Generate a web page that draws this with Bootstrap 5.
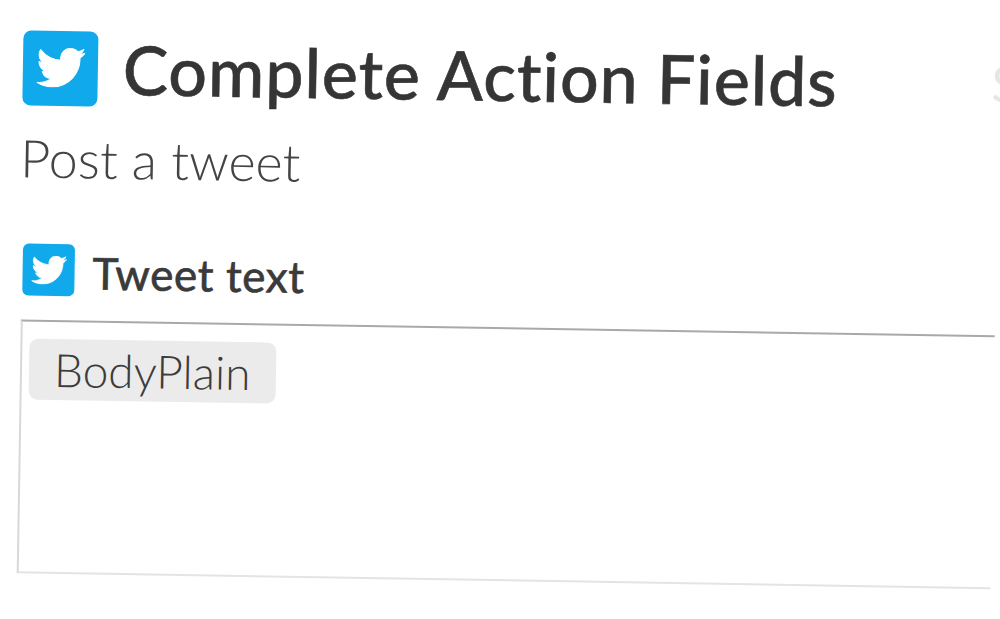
<!DOCTYPE html>
<html lang="en">
<head>
<meta charset="utf-8">
<title>Complete Action Fields</title>
<link href="https://cdn.jsdelivr.net/npm/bootstrap@5.3.0/dist/css/bootstrap.min.css" rel="stylesheet">
<style>
html, body { height: 100%; overflow: hidden; background: #fff; }
body { font-family: Lato, "Open Sans", sans-serif; color: #333; }
.sheet { width: 1020px; padding: 29px 0 0 24px; transform: rotate(.93deg); transform-origin: 0 0; }
.svc { background: #0fa9ec; display: flex; align-items: center; justify-content: center; flex: none; }
.svc-lg { width: 75px; height: 75px; border-radius: 8px; }
.svc-sm { width: 52px; height: 52px; border-radius: 6px; margin-left: 3px; }
.bird { fill: #fff; stroke: #fff; stroke-width: .5; stroke-linejoin: round; }
.title-text { font-size: 68px; font-weight: 500; line-height: 76px; color: #353535; -webkit-text-stroke: .6px #353535; margin: 0 0 0 25px; white-space: nowrap; letter-spacing: 1px; }
.edge-mark { font-size: 50px; color: #e6e6e6; line-height: 76px; }
.sub-text { font-size: 52px; font-weight: 300; line-height: 60px; color: #444; margin: 22px 0 0 -1px; }
.field-label { font-size: 44px; font-weight: 400; line-height: 52px; color: #3a3a3a; -webkit-text-stroke: .7px #3a3a3a; margin: 4px 0 0 18px; letter-spacing: .6px; }
.field-head { margin-top: 54px; }
.entry-box { width: 974px; height: 254px; border-top: 2px solid #a9a9a9; border-left: 2px solid #d8d8d8; border-bottom: 2px solid #e4e4e4; margin: 22px 0 0 2px; padding: 17px 0 0 7px; }
.ingredient { background: #ebebeb; border-radius: 9px; font-size: 46px; font-weight: 300; line-height: 61px; padding: 0 25px; color: #3c3c3c; }
</style>
</head>
<body>
<div class="sheet">
  <div class="d-flex align-items-center">
    <div class="svc svc-lg">
      <svg class="bird" width="48" height="40" viewBox="0 0 24 20" aria-hidden="true"><path d="M24 2.400c-.9.4-1.800.7-2.800.8 1-.6 1.800-1.600 2.200-2.700-1 .6-2 1-3.100 1.200C19.300.7 18 .1 16.700.1c-2.700 0-4.900 2.200-4.900 4.900 0 .4 0 .8.1 1.100C7.800 5.900 4.200 4 1.700.9c-.4.700-.7 1.600-.7 2.500 0 1.700.9 3.200 2.200 4.100-.8 0-1.600-.2-2.200-.6v.1c0 2.400 1.700 4.400 3.900 4.800-.7.200-1.500.2-2.200.1.600 2 2.400 3.400 4.600 3.400-1.700 1.300-3.800 2.100-6.100 2.100-.4 0-.8 0-1.200-.1 2.200 1.400 4.800 2.200 7.500 2.200 9.100 0 14-7.500 14-14v-.6c1-.7 1.800-1.600 2.500-2.500z"/></svg>
    </div>
    <h1 class="title-text">Complete Action Fields</h1>
    <span class="edge-mark ms-auto">S</span>
  </div>
  <p class="sub-text">Post a tweet</p>
  <div class="d-flex align-items-center field-head">
    <div class="svc svc-sm">
      <svg class="bird" width="35" height="29" viewBox="0 0 24 20" aria-hidden="true"><path d="M24 2.400c-.9.4-1.800.7-2.800.8 1-.6 1.800-1.600 2.200-2.700-1 .6-2 1-3.100 1.200C19.300.7 18 .1 16.700.1c-2.700 0-4.900 2.200-4.900 4.900 0 .4 0 .8.1 1.100C7.800 5.900 4.200 4 1.700.9c-.4.700-.7 1.600-.7 2.500 0 1.700.9 3.200 2.200 4.100-.8 0-1.600-.2-2.200-.6v.1c0 2.400 1.700 4.400 3.900 4.800-.7.200-1.500.2-2.200.1.600 2 2.400 3.400 4.600 3.400-1.700 1.300-3.800 2.100-6.100 2.100-.4 0-.8 0-1.200-.1 2.200 1.400 4.800 2.200 7.500 2.200 9.100 0 14-7.500 14-14v-.6c1-.7 1.800-1.600 2.500-2.500z"/></svg>
    </div>
    <span class="field-label">Tweet text</span>
  </div>
  <div class="entry-box">
    <span class="ingredient d-inline-block">BodyPlain</span>
  </div>
</div>
<script src="https://cdn.jsdelivr.net/npm/bootstrap@5.3.0/dist/js/bootstrap.bundle.min.js"></script>
</body>
</html>
